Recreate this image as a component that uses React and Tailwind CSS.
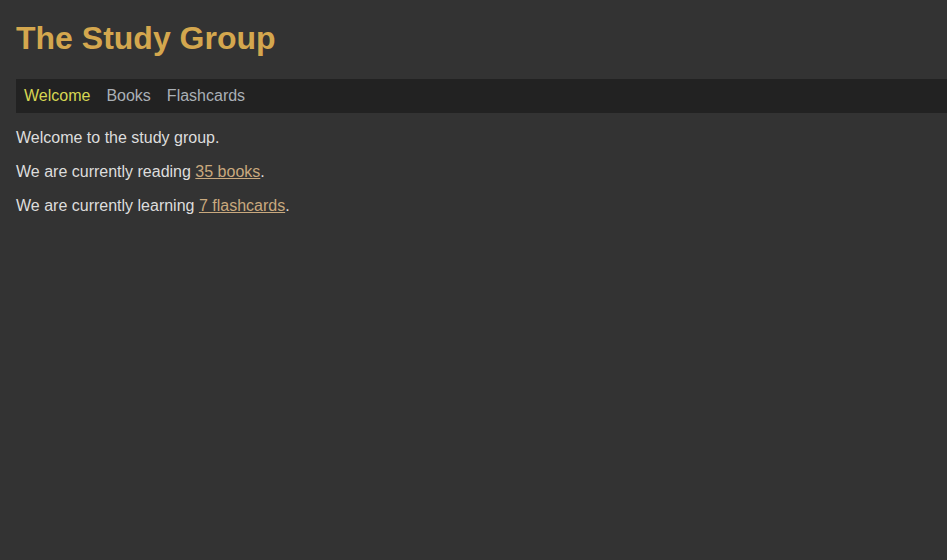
function App() {
  return (
    <div className="min-h-screen bg-[#333333] px-4 text-[#dddddd] font-['Liberation_Sans',Arial,sans-serif] text-base">
      <div className="h-px"></div>
      <h1 className="mt-[19px] mb-[22px] text-[32px] font-bold leading-[normal] text-[#d4a74e]">
        The Study Group
      </h1>

      {/* Nav */}
      <nav className="-mr-4 flex bg-[#222222] py-2 leading-[normal]">
        <a href="#" className="px-2 text-[#d6d653]">Welcome</a>
        <a href="#" className="px-2 text-[#aab0b6]">Books</a>
        <a href="#" className="px-2 text-[#aab0b6]">Flashcards</a>
      </nav>

      <p className="my-4 leading-[normal]">Welcome to the study group.</p>
      <p className="my-4 leading-[normal]">
        We are currently reading{" "}
        <a href="#" className="text-[#c9a97e] underline">35 books</a>.
      </p>
      <p className="my-4 leading-[normal]">
        We are currently learning{" "}
        <a href="#" className="text-[#c9a97e] underline">7 flashcards</a>.
      </p>
    </div>
  );
}

export default App;
